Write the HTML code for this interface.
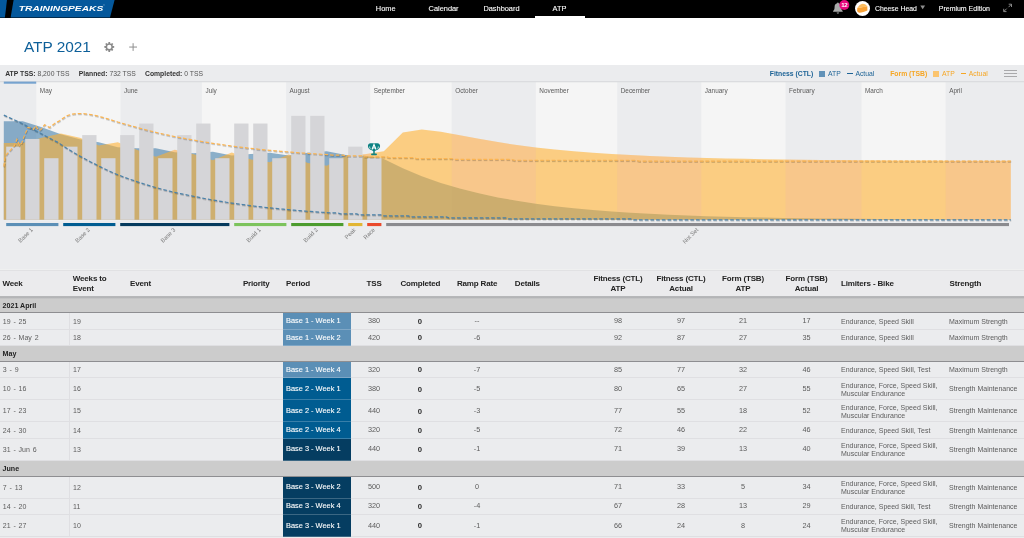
<!DOCTYPE html><html><head><meta charset="utf-8"><title>ATP 2021</title><style>
*{box-sizing:border-box}
html,body{margin:0;padding:0}
body{width:1024px;height:538px;overflow:hidden;background:#fff}
#app{position:relative;width:1024px;height:538px;overflow:hidden;background:#fff;font-family:"Liberation Sans",sans-serif;color:#222;will-change:transform}
.abs{position:absolute;white-space:nowrap}
#hdr{position:absolute;left:0;top:0;width:1024px;height:17.6px;background:#000}
.nav{position:absolute;top:4.2px;font-size:7.4px;line-height:9px;color:#fff;white-space:nowrap;-webkit-text-stroke:0.1px #fff}
#title{position:absolute;left:23.9px;top:38.2px;font-size:15.4px;line-height:17px;color:#0d5f99;white-space:nowrap}
#gray{position:absolute;left:0;top:65.4px;width:1024px;height:473px;background:#ebecee}
.sum{position:absolute;top:69.6px;font-size:6.8px;line-height:8px;color:#555;white-space:nowrap}
.sum b{color:#333}
.lg{position:absolute;top:69.7px;font-size:6.8px;line-height:8px;white-space:nowrap}
#tbl{position:absolute;left:0;top:270.4px;width:1024px}
.th{position:absolute;font-weight:bold;font-size:8px;letter-spacing:-0.16px;line-height:9.4px;color:#222;white-space:nowrap}
.row{position:absolute;left:0;width:1024px;border-bottom:1px solid #dfdfe2;font-size:7px;color:#5c5c5c}
.grp{position:absolute;left:0;width:1024px;background:#cccccc;border-bottom:1.4px solid #8e8e91;font-size:7.1px;font-weight:bold;color:#222}
.grp span{position:absolute;left:2.6px;top:4px;line-height:8px}
.c{position:absolute;white-space:nowrap;line-height:8px;top:50%;margin-top:-3.5px}
.cc{position:absolute;white-space:nowrap;line-height:8px;top:50%;margin-top:-3.8px;transform:translateX(-50%);font-size:7.3px}
.wk{word-spacing:0.9px}
.l2{position:absolute;white-space:nowrap;line-height:7.7px;top:50%;margin-top:-7.1px}
.per{position:absolute;left:283px;width:68.1px;top:0;bottom:-1px;color:#fff;border-bottom:1px solid rgba(255,255,255,0.22);font-size:7.4px;-webkit-text-stroke:0.1px #fff}
.per span{position:absolute;left:3px;top:50%;margin-top:-3.9px;line-height:8px;white-space:nowrap}
.vs{position:absolute;left:69.1px;top:0;bottom:0;width:1.1px;background:#dfdfe2}
</style></head><body><div id="app">
<div id="hdr">
<svg class="abs" style="left:0;top:0" width="120" height="18" viewBox="0 0 120 18">
<path d="M0 0H7L4.900 17.600H0Z" fill="#04589c"/>
<path d="M13.600 0H114.600L110 17.600H10.600Z" fill="#04589c"/>
<text x="18.800" y="10.700" font-size="8.050" font-weight="bold" font-style="italic" fill="#fff" textLength="84.400" lengthAdjust="spacingAndGlyphs">TRAININGPEAKS</text>
<text x="103.300" y="6.300" font-size="2.200" fill="#fff">&#174;</text>
</svg>
<div class="nav" style="left:375.8px">Home</div>
<div class="nav" style="left:428.6px">Calendar</div>
<div class="nav" style="left:483.4px">Dashboard</div>
<div class="nav" style="left:552.5px">ATP</div>
<div class="abs" style="left:534.6px;top:15.9px;width:50.4px;height:1.8px;background:#fff"></div>
<svg class="abs" style="left:830px;top:0" width="40" height="18" viewBox="830 0 40 18">
<path d="M837.900 2.400c0.500 0 0.800 0.300 0.800 0.800c1.600 0.400 2.500 1.800 2.500 3.500c0 2.300 0.400 3.400 1.500 4.400v0.700h-9.600v-0.700c1.100-1 1.500-2.100 1.500-4.400c0-1.700 0.900-3.100 2.500-3.500c0-0.500 0.300-0.800 0.800-0.800z" fill="#a9abab"/>
<path d="M836.700 12.500h2.400c0 0.700-0.500 1.200-1.200 1.200s-1.200-0.500-1.200-1.200z" fill="#a9abab"/>
<circle cx="844.300" cy="5" r="5" fill="#e6097e"/>
<text x="844.300" y="7.150" font-size="6.100" font-weight="bold" fill="#fff" text-anchor="middle" letter-spacing="-0.250">12</text>
<circle cx="862.500" cy="8.500" r="7.500" fill="#fff"/>
<path d="M857.300 7.900L867.300 6.300L867.400 10.500C865 11.600 861.800 12.500 859.100 12.700C858.100 12.300 857.400 11.700 857.100 11Z" fill="#f9a236"/>
<path d="M857.300 8.100C858.300 6 860.300 4.100 862.700 3.700C864.700 3.900 866.500 4.900 867.400 6.500Z" fill="#fbbd60"/>
</svg>
<div class="nav" style="left:875px;color:#fff;font-size:6.85px">Cheese Head</div>
<svg class="abs" style="left:920px;top:5px" width="6" height="5" viewBox="0 0 6 5"><path d="M0.300 0.600h4.800l-2.400 3.600z" fill="#8f8f8f"/></svg>
<div class="nav" style="left:938.8px;color:#fff;font-size:6.98px">Premium Edition</div>
<svg class="abs" style="left:1002px;top:2px" width="12" height="12" viewBox="0 0 12 12" fill="none" stroke="#a0a0a0" stroke-width="0.850">
<path d="M6.500 5.200L9.100 2.600M6.700 2.200H9.500V5"/><path d="M4.700 6.600L2.100 9.200M1.700 6.800V9.600H4.500"/></svg>
</div>
<div id="title">ATP 2021</div>
<svg class="abs" style="left:100px;top:38px" width="44" height="18" viewBox="100 38 44 18"><path d="M108.34 43.38L108.41 42.03L110.11 42.03L110.18 43.38L111.15 43.78L112.15 42.88L113.34 44.07L112.44 45.07L112.84 46.04L114.19 46.11L114.19 47.81L112.84 47.88L112.44 48.85L113.34 49.85L112.15 51.04L111.15 50.14L110.18 50.54L110.11 51.89L108.41 51.89L108.34 50.54L107.37 50.14L106.37 51.04L105.18 49.85L106.08 48.85L105.68 47.88L104.33 47.81L104.33 46.11L105.68 46.04L106.08 45.07L105.18 44.07L106.37 42.88L107.37 43.78ZM107.11 46.96A2.15 2.15 0 1 0 111.41 46.96A2.15 2.15 0 1 0 107.11 46.96Z" fill="#8a8a8a" fill-rule="evenodd"/><circle cx="109.26" cy="46.96" r="0" fill="none"/><path d="M129.200 47.050H137M133.100 43.200V50.900" stroke="#8f8f8f" stroke-width="1" fill="none"/></svg>
<div id="gray"></div>
<div class="sum" style="left:5.2px"><b>ATP TSS:</b> 8,200 TSS</div>
<div class="sum" style="left:78.8px"><b>Planned:</b> 732 TSS</div>
<div class="sum" style="left:145px"><b>Completed:</b> 0 TSS</div>
<div class="lg" style="left:769.8px;color:#1d6396;font-weight:bold">Fitness (CTL)</div>
<div class="abs" style="left:819.3px;top:70.500px;width:6.200px;height:6.200px;background:#6192b8"></div>
<div class="lg" style="left:828px;color:#1d6396">ATP</div>
<div class="abs" style="left:847px;top:73.300px;width:5.800px;height:0.900px;background:#1d6396"></div>
<div class="lg" style="left:855.400px;color:#1d6396">Actual</div>
<div class="lg" style="left:890.200px;color:#f6a623;font-weight:bold">Form (TSB)</div>
<div class="abs" style="left:933px;top:70.500px;width:6.200px;height:6.200px;background:#fbc46e"></div>
<div class="lg" style="left:942px;color:#f6a623">ATP</div>
<div class="abs" style="left:960.600px;top:73.300px;width:5.800px;height:0.900px;background:#f6a623"></div>
<div class="lg" style="left:968.800px;color:#f6a623">Actual</div>
<div class="abs" style="left:1004.400px;top:70.3px;width:12.900px;height:0.900px;background:#a9a9ab"></div>
<div class="abs" style="left:1004.400px;top:73.1px;width:12.900px;height:0.900px;background:#a9a9ab"></div>
<div class="abs" style="left:1004.400px;top:75.9px;width:12.900px;height:0.900px;background:#a9a9ab"></div>
<svg id="chart" width="1024" height="190" viewBox="0 80 1024 190" style="position:absolute;left:0;top:80px">
<rect x="36.37" y="82" width="84.14" height="138.3" fill="#f5f5f5"/>
<rect x="201.94" y="82" width="84.14" height="138.3" fill="#f5f5f5"/>
<rect x="370.23" y="82" width="81.43" height="138.3" fill="#f5f5f5"/>
<rect x="535.8" y="82" width="81.43" height="138.3" fill="#f5f5f5"/>
<rect x="701.37" y="82" width="84.14" height="138.3" fill="#f5f5f5"/>
<rect x="861.51" y="82" width="84.14" height="138.3" fill="#f5f5f5"/>
<rect x="0" y="81" width="1024" height="1.300" fill="#dbdcdf"/>
<rect x="3.8" y="81.6" width="32.4" height="2.1" fill="#76a3cf"/>
<text x="39.87" y="92.9" font-size="6.4" fill="#5a5a5a">May</text>
<text x="124.01" y="92.9" font-size="6.4" fill="#5a5a5a">June</text>
<text x="205.44" y="92.9" font-size="6.4" fill="#5a5a5a">July</text>
<text x="289.59" y="92.9" font-size="6.4" fill="#5a5a5a">August</text>
<text x="373.73" y="92.9" font-size="6.4" fill="#5a5a5a">September</text>
<text x="455.16" y="92.9" font-size="6.4" fill="#5a5a5a">October</text>
<text x="539.3" y="92.9" font-size="6.4" fill="#5a5a5a">November</text>
<text x="620.73" y="92.9" font-size="6.4" fill="#5a5a5a">December</text>
<text x="704.87" y="92.9" font-size="6.4" fill="#5a5a5a">January</text>
<text x="789.01" y="92.9" font-size="6.4" fill="#5a5a5a">February</text>
<text x="865.01" y="92.9" font-size="6.4" fill="#5a5a5a">March</text>
<text x="949.16" y="92.9" font-size="6.4" fill="#5a5a5a">April</text>
<path d="M3.8 219.8L3.8 121.21L22.8 121.21L41.8 127.24L60.8 134.27L79.8 139.3L98.8 142.31L117.8 147.34L136.8 148.34L155.8 148.34L174.8 152.37L193.8 153.37L212.8 151.76L231.8 155.38L250.8 153.97L269.8 152.87L288.8 155.38L307.8 152.87L326.8 151.26L345.8 155.08L364.8 155.78L383.8 158.9L402.8 168.26L421.8 176.18L440.8 182.88L459.8 188.55L478.8 193.35L497.8 197.41L516.8 200.84L535.8 203.75L554.8 206.2L573.8 208.28L592.8 210.04L611.8 211.53L630.8 212.79L649.8 213.85L668.8 214.75L687.8 215.51L706.8 216.16L725.8 216.7L744.8 217.17L763.8 217.56L782.8 217.89L801.8 218.17L820.8 218.4L839.8 218.6L858.8 218.77L877.8 218.91L896.8 219.03L915.8 219.14L934.8 219.22L953.8 219.3L972.8 219.36L991.8 219.41L1010.8 219.46L1010.8 219.8Z" fill="#0a5a94" fill-opacity="0.45"/>
<path d="M3.8 219.8L3.8 143L22.8 143L41.8 137.86L60.8 133.58L79.8 137.86L98.8 145.57L117.8 142.15L136.8 149.86L155.8 156.72L174.8 149.86L193.8 154.14L212.8 160.23L231.8 152.43L250.8 159.5L269.8 162.37L288.8 154.57L307.8 162.97L326.8 165.71L345.8 155.69L364.8 154.14L383.8 151.23L402.8 132.62L421.8 129.59L440.8 131.7L459.8 135.21L478.8 138.81L497.8 142.1L516.8 144.96L535.8 147.41L554.8 149.5L573.8 151.26L592.8 152.76L611.8 154.03L630.8 155.1L649.8 156.01L668.8 156.78L687.8 157.43L706.8 157.98L725.8 158.44L744.8 158.84L763.8 159.17L782.8 159.45L801.8 159.69L820.8 159.89L839.8 160.06L858.8 160.21L877.8 160.33L896.8 160.43L915.8 160.52L934.8 160.59L953.8 160.66L972.8 160.71L991.8 160.75L1010.8 160.79L1010.8 219.8Z" fill="#ffb02f" fill-opacity="0.58"/>
<defs><mask id="om" maskUnits="userSpaceOnUse" x="0" y="80" width="1024" height="150"><path d="M3.8 219.8L3.8 143L22.8 143L41.8 137.86L60.8 133.58L79.8 137.86L98.8 145.57L117.8 142.15L136.8 149.86L155.8 156.72L174.8 149.86L193.8 154.14L212.8 160.23L231.8 152.43L250.8 159.5L269.8 162.37L288.8 154.57L307.8 162.97L326.8 165.71L345.8 155.69L364.8 154.14L383.8 151.23L402.8 132.62L421.8 129.59L440.8 131.7L459.8 135.21L478.8 138.81L497.8 142.1L516.8 144.96L535.8 147.41L554.8 149.5L573.8 151.26L592.8 152.76L611.8 154.03L630.8 155.1L649.8 156.01L668.8 156.78L687.8 157.43L706.8 157.98L725.8 158.44L744.8 158.84L763.8 159.17L782.8 159.45L801.8 159.69L820.8 159.89L839.8 160.06L858.8 160.21L877.8 160.33L896.8 160.43L915.8 160.52L934.8 160.59L953.8 160.66L972.8 160.71L991.8 160.75L1010.8 160.79L1010.8 219.8Z" fill="#fff"/><path d="M3.8 219.8L3.8 121.21L22.8 121.21L41.8 127.24L60.8 134.27L79.8 139.3L98.8 142.31L117.8 147.34L136.8 148.34L155.8 148.34L174.8 152.37L193.8 153.37L212.8 151.76L231.8 155.38L250.8 153.97L269.8 152.87L288.8 155.38L307.8 152.87L326.8 151.26L345.8 155.08L364.8 155.78L383.8 158.9L402.8 168.26L421.8 176.18L440.8 182.88L459.8 188.55L478.8 193.35L497.8 197.41L516.8 200.84L535.8 203.75L554.8 206.2L573.8 208.28L592.8 210.04L611.8 211.53L630.8 212.79L649.8 213.85L668.8 214.75L687.8 215.51L706.8 216.16L725.8 216.7L744.8 217.17L763.8 217.56L782.8 217.89L801.8 218.17L820.8 218.4L839.8 218.6L858.8 218.77L877.8 218.91L896.8 219.03L915.8 219.14L934.8 219.22L953.8 219.3L972.8 219.36L991.8 219.41L1010.8 219.46L1010.8 219.8Z" fill="#000"/></mask></defs>
<g mask="url(#om)" fill="#ffbae3" fill-opacity="0.12">
<rect x="0" y="82" width="36.37" height="138.3"/>
<rect x="120.51" y="82" width="81.43" height="138.3"/>
<rect x="286.09" y="82" width="84.14" height="138.3"/>
<rect x="451.66" y="82" width="84.14" height="138.3"/>
<rect x="617.23" y="82" width="84.14" height="138.3"/>
<rect x="785.51" y="82" width="76" height="138.3"/>
<rect x="945.66" y="82" width="78.34" height="138.3"/>
</g>
<rect x="6.2" y="146.65" width="14.3" height="73.15" fill="#d5d5d8"/>
<rect x="25.2" y="138.95" width="14.3" height="80.85" fill="#d5d5d8"/>
<rect x="44.2" y="158.2" width="14.3" height="61.6" fill="#d5d5d8"/>
<rect x="63.2" y="146.65" width="14.3" height="73.15" fill="#d5d5d8"/>
<rect x="82.2" y="135.1" width="14.3" height="84.7" fill="#d5d5d8"/>
<rect x="101.2" y="158.2" width="14.3" height="61.6" fill="#d5d5d8"/>
<rect x="120.2" y="135.1" width="14.3" height="84.7" fill="#d5d5d8"/>
<rect x="139.2" y="123.55" width="14.3" height="96.25" fill="#d5d5d8"/>
<rect x="158.2" y="158.2" width="14.3" height="61.6" fill="#d5d5d8"/>
<rect x="177.2" y="135.1" width="14.3" height="84.7" fill="#d5d5d8"/>
<rect x="196.2" y="123.55" width="14.3" height="96.25" fill="#d5d5d8"/>
<rect x="215.2" y="158.2" width="14.3" height="61.6" fill="#d5d5d8"/>
<rect x="234.2" y="123.55" width="14.3" height="96.25" fill="#d5d5d8"/>
<rect x="253.2" y="123.55" width="14.3" height="96.25" fill="#d5d5d8"/>
<rect x="272.2" y="158.2" width="14.3" height="61.6" fill="#d5d5d8"/>
<rect x="291.2" y="115.85" width="14.3" height="103.95" fill="#d5d5d8"/>
<rect x="310.2" y="115.85" width="14.3" height="103.95" fill="#d5d5d8"/>
<rect x="329.2" y="158.2" width="14.3" height="61.6" fill="#d5d5d8"/>
<rect x="348.2" y="146.65" width="14.3" height="73.15" fill="#d5d5d8"/>
<rect x="367.2" y="158.2" width="14.3" height="61.6" fill="#d5d5d8"/>
<defs><path id="lc" d="M3.8 115.14L6.51 116.39L9.23 117.62L11.94 118.84L14.66 120.05L17.37 121.24L20.09 122.42L22.8 123.92L25.51 125.4L28.23 126.86L30.94 128.29L33.66 129.7L36.37 131.1L39.09 132.46L41.8 133.98L44.51 135.46L47.23 136.92L49.94 138.36L52.66 139.77L55.37 141.15L58.09 142.51L60.8 144.37L63.51 146.17L66.23 147.93L68.94 149.66L71.66 151.34L74.37 152.97L77.09 154.57L79.8 156.12L82.51 157.62L85.23 159.09L87.94 160.52L90.66 161.92L93.37 163.29L96.09 164.62L98.8 166.02L101.51 167.38L104.23 168.7L106.94 169.99L109.66 171.25L112.37 172.47L115.09 173.67L117.8 174.75L120.51 175.8L123.23 176.83L125.94 177.83L128.66 178.81L131.37 179.77L134.09 180.7L136.8 181.63L139.51 182.53L142.23 183.41L144.94 184.27L147.66 185.11L150.37 185.93L153.09 186.73L155.8 187.5L158.51 188.26L161.23 188.99L163.94 189.71L166.66 190.41L169.37 191.09L172.09 191.76L174.8 192.37L177.51 192.97L180.23 193.56L182.94 194.13L185.66 194.69L188.37 195.24L191.09 195.78L193.8 196.35L196.51 196.91L199.23 197.45L201.94 197.98L204.66 198.5L207.37 199L210.09 199.49L212.8 199.98L215.51 200.45L218.23 200.91L220.94 201.35L223.66 201.79L226.37 202.22L229.09 202.64L231.8 203.04L234.51 203.44L237.23 203.83L239.94 204.21L242.66 204.58L245.37 204.94L248.09 205.3L250.8 205.64L253.51 205.98L256.23 206.31L258.94 206.63L261.66 206.94L264.37 207.25L267.09 207.54L269.8 207.84L272.51 208.12L275.23 208.4L277.94 208.67L280.66 208.94L283.37 209.19L286.09 209.45L288.8 209.69L291.51 209.93L294.23 210.17L296.94 210.4L299.66 210.62L302.37 210.84L305.09 211.06L307.8 211.27L310.51 211.47L313.23 211.67L315.94 211.86L318.66 212.05L321.37 212.24L324.09 212.42L326.8 212.6L329.51 212.77L332.23 212.86L334.94 212.86L337.66 212.86L340.37 213.87L343.09 213.87L345.8 213.87L348.51 213.87L351.23 213.87L353.94 213.87L356.66 213.87L359.37 214.87L362.09 214.87L364.8 214.87L367.51 214.87L370.23 214.87L372.94 214.87L375.66 214.87L378.37 214.87L381.09 214.87L383.8 215.88L386.51 215.88L389.23 215.88L391.94 215.88L394.66 215.88L397.37 215.88L400.09 215.88L402.8 215.88L405.51 215.88L408.23 215.88L410.94 216.88L413.66 216.88L416.37 216.88L419.09 216.88L421.8 216.88L424.51 216.88L427.23 216.88L429.94 216.88L432.66 216.88L435.37 216.88L438.09 216.88L440.8 216.88L443.51 216.88L446.23 216.88L448.94 217.89L451.66 217.89L454.37 217.89L457.09 217.89L459.8 217.89L462.51 217.89L465.23 217.89L467.94 217.89L470.66 217.89L473.37 217.89L476.09 217.89L478.8 217.89L481.51 217.89L484.23 217.89L486.94 217.89L489.66 217.89L492.37 217.89L495.09 217.89L497.8 217.89L500.51 217.89L503.23 217.89L505.94 217.89L508.66 218.89L511.37 218.89L514.09 218.89L516.8 218.89L519.51 218.89L522.23 218.89L524.94 218.89L527.66 218.89L530.37 218.89L533.09 218.89L535.8 218.89L538.51 218.89L541.23 218.89L543.94 218.89L546.66 218.89L549.37 218.89L552.09 218.89L554.8 218.89L557.51 218.89L560.23 218.89L562.94 218.89L565.66 218.89L568.37 218.89L571.09 218.89L573.8 218.89L576.51 218.89L579.23 218.89L581.94 218.89L584.66 218.89L587.37 218.89L590.09 218.89L592.8 218.89L595.51 218.89L598.23 218.89L600.94 218.89L603.66 218.89L606.37 218.89L609.09 218.89L611.8 218.89L614.51 218.89L617.23 218.89L619.94 218.89L622.66 218.89L625.37 218.89L628.09 218.89L630.8 218.89L633.51 219.9L636.23 219.9L638.94 219.9L641.66 219.9L644.37 219.9L647.09 219.9L649.8 219.9L652.51 219.9L655.23 219.9L657.94 219.9L660.66 219.9L663.37 219.9L666.09 219.9L668.8 219.9L671.51 219.9L674.23 219.9L676.94 219.9L679.66 219.9L682.37 219.9L685.09 219.9L687.8 219.9L690.51 219.9L693.23 219.9L695.94 219.9L698.66 219.9L701.37 219.9L704.09 219.9L706.8 219.9L709.51 219.9L712.23 219.9L714.94 219.9L717.66 219.9L720.37 219.9L723.09 219.9L725.8 219.9L728.51 219.9L731.23 219.9L733.94 219.9L736.66 219.9L739.37 219.9L742.09 219.9L744.8 219.9L747.51 219.9L750.23 219.9L752.94 219.9L755.66 219.9L758.37 219.9L761.09 219.9L763.8 219.9L766.51 219.9L769.23 219.9L771.94 219.9L774.66 219.9L777.37 219.9L780.09 219.9L782.8 219.9L785.51 219.9L788.23 219.9L790.94 219.9L793.66 219.9L796.37 219.9L799.09 219.9L801.8 219.9L804.51 219.9L807.23 219.9L809.94 219.9L812.66 219.9L815.37 219.9L818.09 219.9L820.8 219.9L823.51 219.9L826.23 219.9L828.94 219.9L831.66 219.9L834.37 219.9L837.09 219.9L839.8 219.9L842.51 219.9L845.23 219.9L847.94 219.9L850.66 219.9L853.37 219.9L856.09 219.9L858.8 219.9L861.51 219.9L864.23 219.9L866.94 219.9L869.66 219.9L872.37 219.9L875.09 219.9L877.8 219.9L880.51 219.9L883.23 219.9L885.94 219.9L888.66 219.9L891.37 219.9L894.09 219.9L896.8 219.9L899.51 219.9L902.23 219.9L904.94 219.9L907.66 219.9L910.37 219.9L913.09 219.9L915.8 219.9L918.51 219.9L921.23 219.9L923.94 219.9L926.66 219.9L929.37 219.9L932.09 219.9L934.8 219.9L937.51 219.9L940.23 219.9L942.94 219.9L945.66 219.9L948.37 219.9L951.09 219.9L953.8 219.9L956.51 219.9L959.23 219.9L961.94 219.9L964.66 219.9L967.37 219.9L970.09 219.9L972.8 219.9L975.51 219.9L978.23 219.9L980.94 219.9L983.66 219.9L986.37 219.9L989.09 219.9L991.8 219.9L994.51 219.9L997.23 219.9L999.94 219.9L1002.66 219.9L1005.37 219.9L1008.09 219.9L1010.8 219.9" fill="none" stroke-dasharray="3.6 2.1"/></defs>
<use href="#lc" transform="translate(0.45 0.85)" stroke="#000" stroke-opacity="0.10" stroke-width="2.2"/>
<use href="#lc" transform="translate(0.45 0.85)" stroke="#000" stroke-opacity="0.12" stroke-width="1.2"/>
<use href="#lc" stroke="#4a82aa" stroke-width="1.2"/>
<defs><path id="lt" d="M3.9 166.6L5 157.7L6.7 154.3L11.2 149.3L14.5 145.4L16.95 139.3L19.5 145.4L21.7 143.2L24.5 135.4L27.9 127.5L30.7 128.1L33.5 129.2L35.7 125.6L38.5 130.3L40.7 129.8L44.6 124.8L49.6 127.5L55 123.3L60 120.5L66.23 116.04L68.94 115.01L71.66 114.28L74.37 113.82L77.09 113.57L79.8 113.52L82.51 113.6L85.23 113.82L87.94 114.16L90.66 114.59L93.37 115.1L96.09 115.68L98.8 116.31L101.51 117.07L104.23 117.85L106.94 118.66L109.66 119.48L112.37 120.32L115.09 121.16L117.8 122.01L120.51 122.78L123.23 123.55L125.94 124.32L128.66 125.09L131.37 125.85L134.09 126.6L136.8 127.35L139.51 128.09L142.23 128.82L144.94 129.55L147.66 130.26L150.37 130.96L153.09 131.64L155.8 132.31L158.51 132.96L161.23 133.6L163.94 134.22L166.66 134.83L169.37 135.43L172.09 136.02L174.8 136.59L177.51 137.12L180.23 137.63L182.94 138.14L185.66 138.64L188.37 139.12L191.09 139.6L193.8 140.06L196.51 140.56L199.23 141.04L201.94 141.51L204.66 141.97L207.37 142.42L210.09 142.86L212.8 143.29L215.51 143.71L218.23 144.12L220.94 144.52L223.66 144.91L226.37 145.29L229.09 145.67L231.8 146.03L234.51 146.38L237.23 146.73L239.94 147.07L242.66 147.4L245.37 147.72L248.09 148.04L250.8 148.35L253.51 148.65L256.23 148.94L258.94 149.23L261.66 149.51L264.37 149.78L267.09 150.05L269.8 150.31L272.51 150.57L275.23 150.81L277.94 151.06L280.66 151.29L283.37 151.53L286.09 151.75L288.8 151.97L291.51 152.19L294.23 152.4L296.94 152.6L299.66 152.8L302.37 153L305.09 153.19L307.8 153.38L310.51 153.56L313.23 153.74L315.94 153.91L318.66 154.08L321.37 154.25L324.09 154.41L326.8 154.57L329.51 154.72L332.23 155.1L334.94 155.1L337.66 155.1L340.37 155.1L343.09 155.1L345.8 155.96L348.51 155.96L351.23 155.96L353.94 155.96L356.66 155.96L359.37 155.96L362.09 155.96L364.8 156.81L367.51 156.81L370.23 156.81L372.94 156.81L375.66 156.81L378.37 156.81L381.09 156.81L383.8 156.81L386.51 156.81L389.23 157.67L391.94 157.67L394.66 157.67L397.37 157.67L400.09 157.67L402.8 157.67L405.51 157.67L408.23 157.67L410.94 157.67L413.66 157.67L416.37 158.53L419.09 158.53L421.8 158.53L424.51 158.53L427.23 158.53L429.94 158.53L432.66 158.53L435.37 158.53L438.09 158.53L440.8 158.53L443.51 158.53L446.23 158.53L448.94 158.53L451.66 158.53L454.37 159.39L457.09 159.39L459.8 159.39L462.51 159.39L465.23 159.39L467.94 159.39L470.66 159.39L473.37 159.39L476.09 159.39L478.8 159.39L481.51 159.39L484.23 159.39L486.94 159.39L489.66 159.39L492.37 159.39L495.09 159.39L497.8 159.39L500.51 159.39L503.23 159.39L505.94 159.39L508.66 159.39L511.37 159.39L514.09 160.24L516.8 160.24L519.51 160.24L522.23 160.24L524.94 160.24L527.66 160.24L530.37 160.24L533.09 160.24L535.8 160.24L538.51 160.24L541.23 160.24L543.94 160.24L546.66 160.24L549.37 160.24L552.09 160.24L554.8 160.24L557.51 160.24L560.23 160.24L562.94 160.24L565.66 160.24L568.37 160.24L571.09 160.24L573.8 160.24L576.51 160.24L579.23 160.24L581.94 160.24L584.66 160.24L587.37 160.24L590.09 160.24L592.8 160.24L595.51 160.24L598.23 160.24L600.94 160.24L603.66 160.24L606.37 160.24L609.09 160.24L611.8 160.24L614.51 160.24L617.23 160.24L619.94 160.24L622.66 160.24L625.37 160.24L628.09 160.24L630.8 160.24L633.51 160.24L636.23 160.24L638.94 161.1L641.66 161.1L644.37 161.1L647.09 161.1L649.8 161.1L652.51 161.1L655.23 161.1L657.94 161.1L660.66 161.1L663.37 161.1L666.09 161.1L668.8 161.1L671.51 161.1L674.23 161.1L676.94 161.1L679.66 161.1L682.37 161.1L685.09 161.1L687.8 161.1L690.51 161.1L693.23 161.1L695.94 161.1L698.66 161.1L701.37 161.1L704.09 161.1L706.8 161.1L709.51 161.1L712.23 161.1L714.94 161.1L717.66 161.1L720.37 161.1L723.09 161.1L725.8 161.1L728.51 161.1L731.23 161.1L733.94 161.1L736.66 161.1L739.37 161.1L742.09 161.1L744.8 161.1L747.51 161.1L750.23 161.1L752.94 161.1L755.66 161.1L758.37 161.1L761.09 161.1L763.8 161.1L766.51 161.1L769.23 161.1L771.94 161.1L774.66 161.1L777.37 161.1L780.09 161.1L782.8 161.1L785.51 161.1L788.23 161.1L790.94 161.1L793.66 161.1L796.37 161.1L799.09 161.1L801.8 161.1L804.51 161.1L807.23 161.1L809.94 161.1L812.66 161.1L815.37 161.1L818.09 161.1L820.8 161.1L823.51 161.1L826.23 161.1L828.94 161.1L831.66 161.1L834.37 161.1L837.09 161.1L839.8 161.1L842.51 161.1L845.23 161.1L847.94 161.1L850.66 161.1L853.37 161.1L856.09 161.1L858.8 161.1L861.51 161.1L864.23 161.1L866.94 161.1L869.66 161.1L872.37 161.1L875.09 161.1L877.8 161.1L880.51 161.1L883.23 161.1L885.94 161.1L888.66 161.1L891.37 161.1L894.09 161.1L896.8 161.1L899.51 161.1L902.23 161.1L904.94 161.1L907.66 161.1L910.37 161.1L913.09 161.1L915.8 161.1L918.51 161.1L921.23 161.1L923.94 161.1L926.66 161.1L929.37 161.1L932.09 161.1L934.8 161.1L937.51 161.1L940.23 161.1L942.94 161.1L945.66 161.1L948.37 161.1L951.09 161.1L953.8 161.1L956.51 161.1L959.23 161.1L961.94 161.1L964.66 161.1L967.37 161.1L970.09 161.1L972.8 161.1L975.51 161.1L978.23 161.1L980.94 161.1L983.66 161.1L986.37 161.1L989.09 161.1L991.8 161.1L994.51 161.1L997.23 161.1L999.94 161.1L1002.66 161.1L1005.37 161.1L1008.09 161.1L1010.8 161.1" fill="none" stroke-dasharray="3.6 2.1"/></defs>
<use href="#lt" transform="translate(0.45 0.85)" stroke="#000" stroke-opacity="0.10" stroke-width="2.2"/>
<use href="#lt" transform="translate(0.45 0.85)" stroke="#000" stroke-opacity="0.12" stroke-width="1.2"/>
<use href="#lt" stroke="#fcb552" stroke-width="1.2"/>
<rect x="6.2" y="223" width="52.2" height="3.1" fill="#5b8fb6"/>
<text transform="translate(33.3 230.2) rotate(-45)" text-anchor="end" font-size="5.8" fill="#7c7c7c">Base 1</text>
<rect x="63.2" y="223" width="52.2" height="3.1" fill="#005c91"/>
<text transform="translate(90.3 230.2) rotate(-45)" text-anchor="end" font-size="5.8" fill="#7c7c7c">Base 2</text>
<rect x="120.2" y="223" width="109.2" height="3.1" fill="#053a5d"/>
<text transform="translate(175.8 230.2) rotate(-45)" text-anchor="end" font-size="5.8" fill="#7c7c7c">Base 3</text>
<rect x="234.2" y="223" width="52.2" height="3.1" fill="#7cc35c"/>
<text transform="translate(261.3 230.2) rotate(-45)" text-anchor="end" font-size="5.8" fill="#7c7c7c">Build 1</text>
<rect x="291.2" y="223" width="52.2" height="3.1" fill="#4c9c2e"/>
<text transform="translate(318.3 230.2) rotate(-45)" text-anchor="end" font-size="5.8" fill="#7c7c7c">Build 2</text>
<rect x="348.2" y="223" width="14.2" height="3.1" fill="#e2b634"/>
<text transform="translate(356.3 230.2) rotate(-45)" text-anchor="end" font-size="5.8" fill="#7c7c7c">Peak</text>
<rect x="367.2" y="223" width="14.2" height="3.1" fill="#ea4a2c"/>
<text transform="translate(375.3 230.2) rotate(-45)" text-anchor="end" font-size="5.8" fill="#7c7c7c">Race</text>
<rect x="386.2" y="223" width="622.8" height="3.1" fill="#8b8b8f"/>
<text transform="translate(698.6 230.2) rotate(-45)" text-anchor="end" font-size="5.8" fill="#7c7c7c">Not Set</text>
<g transform="translate(368 142.900)" fill="#0d8283">
<path d="M2.500 0.250H9.500C10.900 0.250 12.100 1.400 12.100 3.200C12.100 5.400 10.200 6.850 8.300 7.450C7.500 7.750 6.950 8.100 6.750 8.500H5.250C5.050 8.100 4.500 7.750 3.700 7.450C1.800 6.850 -0.100 5.400 -0.100 3.200C-0.100 1.400 1.100 0.250 2.500 0.250Z"/>
<rect x="5.250" y="8.300" width="1.500" height="2.700"/>
<rect x="3.100" y="10.700" width="5.800" height="1.550" rx="0.650"/>
<path d="M1.650 3.600C1.650 4.500 1.850 5.200 2.300 5.800M10.350 3.600C10.350 4.500 10.150 5.200 9.700 5.800" fill="none" stroke="#fff" stroke-width="0.800"/>
<path d="M4 6.600L6 1.700L8 6.600M4.800 5.100H7.200" fill="none" stroke="#fff" stroke-width="1.150"/>
</g>
</svg>
<div id="tbl">
<div class="abs" style="left:0;top:0;width:1024px;height:25.400px;background:#ebebed;border-top:1px solid #e1e1e3;box-shadow:0 -0.8px 0 #f0f0f1"></div>
<div class="abs" style="left:0;top:25.600px;width:1024px;height:2.100px;background:linear-gradient(#ebebed 0,#b6b7b9 0.5px,#b2b3b5 1.3px,#b8b9bb 2.1px);z-index:2"></div>
<div class="abs" style="left:0;top:27.700px;width:1024px;height:1.400px;background:linear-gradient(#babbbd,#cccccc);z-index:2"></div>
<div class="th" style="left:2.5px;top:8.9px">Week</div>
<div class="th" style="left:72.8px;top:4.0px">Weeks to<br>Event</div>
<div class="th" style="left:130px;top:8.9px">Event</div>
<div class="th" style="left:242.9px;top:8.9px">Priority</div>
<div class="th" style="left:286px;top:8.9px">Period</div>
<div class="th" style="left:374.1px;top:8.9px;transform:translateX(-50%);text-align:center">TSS</div>
<div class="th" style="left:420.4px;top:8.9px;transform:translateX(-50%);text-align:center">Completed</div>
<div class="th" style="left:477.1px;top:8.9px;transform:translateX(-50%);text-align:center">Ramp Rate</div>
<div class="th" style="left:514.8px;top:8.9px">Details</div>
<div class="th" style="left:618px;top:4.0px;transform:translateX(-50%);text-align:center">Fitness (CTL)<br>ATP</div>
<div class="th" style="left:681px;top:4.0px;transform:translateX(-50%);text-align:center">Fitness (CTL)<br>Actual</div>
<div class="th" style="left:743px;top:4.0px;transform:translateX(-50%);text-align:center">Form (TSB)<br>ATP</div>
<div class="th" style="left:806.5px;top:4.0px;transform:translateX(-50%);text-align:center">Form (TSB)<br>Actual</div>
<div class="th" style="left:841px;top:8.9px">Limiters - Bike</div>
<div class="th" style="left:949.5px;top:8.9px">Strength</div>
<div class="grp" style="top:27.2px;height:15.8px"><span>2021 April</span></div>
<div class="row" style="top:43.0px;height:16.4px">
<div class="vs"></div>
<div class="c wk" style="left:2.800px">19 - 25</div><div class="c" style="left:73.100px">19</div>
<div class="per" style="background:#5b8fb6"><span>Base 1 - Week 1</span></div>
<div class="cc" style="left:374.100px">380</div>
<div class="cc" style="left:420px;font-weight:bold;color:#2a2a2a;font-size:7.7px;margin-top:-3.4px">0</div>
<div class="cc" style="left:477px">--</div>
<div class="cc" style="left:618px">98</div>
<div class="cc" style="left:681px">97</div>
<div class="cc" style="left:743px">21</div>
<div class="cc" style="left:806.5px">17</div>
<div class="c" style="left:841px">Endurance, Speed Skill</div>
<div class="c" style="left:949px">Maximum Strength</div>
</div>
<div class="row" style="top:59.4px;height:16.4px">
<div class="vs"></div>
<div class="c wk" style="left:2.800px">26 - May 2</div><div class="c" style="left:73.100px">18</div>
<div class="per" style="background:#5b8fb6"><span>Base 1 - Week 2</span></div>
<div class="cc" style="left:374.100px">420</div>
<div class="cc" style="left:420px;font-weight:bold;color:#2a2a2a;font-size:7.7px;margin-top:-3.4px">0</div>
<div class="cc" style="left:477px">-6</div>
<div class="cc" style="left:618px">92</div>
<div class="cc" style="left:681px">87</div>
<div class="cc" style="left:743px">27</div>
<div class="cc" style="left:806.5px">35</div>
<div class="c" style="left:841px">Endurance, Speed Skill</div>
<div class="c" style="left:949px">Maximum Strength</div>
</div>
<div class="grp" style="top:75.8px;height:15.8px"><span>May</span></div>
<div class="row" style="top:91.6px;height:16.4px">
<div class="vs"></div>
<div class="c wk" style="left:2.800px">3 - 9</div><div class="c" style="left:73.100px">17</div>
<div class="per" style="background:#5b8fb6"><span>Base 1 - Week 4</span></div>
<div class="cc" style="left:374.100px">320</div>
<div class="cc" style="left:420px;font-weight:bold;color:#2a2a2a;font-size:7.7px;margin-top:-3.4px">0</div>
<div class="cc" style="left:477px">-7</div>
<div class="cc" style="left:618px">85</div>
<div class="cc" style="left:681px">77</div>
<div class="cc" style="left:743px">32</div>
<div class="cc" style="left:806.5px">46</div>
<div class="c" style="left:841px">Endurance, Speed Skill, Test</div>
<div class="c" style="left:949px">Maximum Strength</div>
</div>
<div class="row" style="top:108.0px;height:22px">
<div class="vs"></div>
<div class="c wk" style="left:2.800px">10 - 16</div><div class="c" style="left:73.100px">16</div>
<div class="per" style="background:#005c91"><span>Base 2 - Week 1</span></div>
<div class="cc" style="left:374.100px">380</div>
<div class="cc" style="left:420px;font-weight:bold;color:#2a2a2a;font-size:7.7px;margin-top:-3.4px">0</div>
<div class="cc" style="left:477px">-5</div>
<div class="cc" style="left:618px">80</div>
<div class="cc" style="left:681px">65</div>
<div class="cc" style="left:743px">27</div>
<div class="cc" style="left:806.5px">55</div>
<div class="l2" style="left:841px">Endurance, Force, Speed Skill,<br>Muscular Endurance</div>
<div class="c" style="left:949px">Strength Maintenance</div>
</div>
<div class="row" style="top:130.0px;height:22px">
<div class="vs"></div>
<div class="c wk" style="left:2.800px">17 - 23</div><div class="c" style="left:73.100px">15</div>
<div class="per" style="background:#005c91"><span>Base 2 - Week 2</span></div>
<div class="cc" style="left:374.100px">440</div>
<div class="cc" style="left:420px;font-weight:bold;color:#2a2a2a;font-size:7.7px;margin-top:-3.4px">0</div>
<div class="cc" style="left:477px">-3</div>
<div class="cc" style="left:618px">77</div>
<div class="cc" style="left:681px">55</div>
<div class="cc" style="left:743px">18</div>
<div class="cc" style="left:806.5px">52</div>
<div class="l2" style="left:841px">Endurance, Force, Speed Skill,<br>Muscular Endurance</div>
<div class="c" style="left:949px">Strength Maintenance</div>
</div>
<div class="row" style="top:152.0px;height:16.4px">
<div class="vs"></div>
<div class="c wk" style="left:2.800px">24 - 30</div><div class="c" style="left:73.100px">14</div>
<div class="per" style="background:#005c91"><span>Base 2 - Week 4</span></div>
<div class="cc" style="left:374.100px">320</div>
<div class="cc" style="left:420px;font-weight:bold;color:#2a2a2a;font-size:7.7px;margin-top:-3.4px">0</div>
<div class="cc" style="left:477px">-5</div>
<div class="cc" style="left:618px">72</div>
<div class="cc" style="left:681px">46</div>
<div class="cc" style="left:743px">22</div>
<div class="cc" style="left:806.5px">46</div>
<div class="c" style="left:841px">Endurance, Speed Skill, Test</div>
<div class="c" style="left:949px">Strength Maintenance</div>
</div>
<div class="row" style="top:168.4px;height:22px">
<div class="vs"></div>
<div class="c wk" style="left:2.800px">31 - Jun 6</div><div class="c" style="left:73.100px">13</div>
<div class="per" style="background:#053d61"><span>Base 3 - Week 1</span></div>
<div class="cc" style="left:374.100px">440</div>
<div class="cc" style="left:420px;font-weight:bold;color:#2a2a2a;font-size:7.7px;margin-top:-3.4px">0</div>
<div class="cc" style="left:477px">-1</div>
<div class="cc" style="left:618px">71</div>
<div class="cc" style="left:681px">39</div>
<div class="cc" style="left:743px">13</div>
<div class="cc" style="left:806.5px">40</div>
<div class="l2" style="left:841px">Endurance, Force, Speed Skill,<br>Muscular Endurance</div>
<div class="c" style="left:949px">Strength Maintenance</div>
</div>
<div class="grp" style="top:190.4px;height:15.8px"><span>June</span></div>
<div class="row" style="top:206.2px;height:22px">
<div class="vs"></div>
<div class="c wk" style="left:2.800px">7 - 13</div><div class="c" style="left:73.100px">12</div>
<div class="per" style="background:#053d61"><span>Base 3 - Week 2</span></div>
<div class="cc" style="left:374.100px">500</div>
<div class="cc" style="left:420px;font-weight:bold;color:#2a2a2a;font-size:7.7px;margin-top:-3.4px">0</div>
<div class="cc" style="left:477px">0</div>
<div class="cc" style="left:618px">71</div>
<div class="cc" style="left:681px">33</div>
<div class="cc" style="left:743px">5</div>
<div class="cc" style="left:806.5px">34</div>
<div class="l2" style="left:841px">Endurance, Force, Speed Skill,<br>Muscular Endurance</div>
<div class="c" style="left:949px">Strength Maintenance</div>
</div>
<div class="row" style="top:228.2px;height:16.4px">
<div class="vs"></div>
<div class="c wk" style="left:2.800px">14 - 20</div><div class="c" style="left:73.100px">11</div>
<div class="per" style="background:#053d61"><span>Base 3 - Week 4</span></div>
<div class="cc" style="left:374.100px">320</div>
<div class="cc" style="left:420px;font-weight:bold;color:#2a2a2a;font-size:7.7px;margin-top:-3.4px">0</div>
<div class="cc" style="left:477px">-4</div>
<div class="cc" style="left:618px">67</div>
<div class="cc" style="left:681px">28</div>
<div class="cc" style="left:743px">13</div>
<div class="cc" style="left:806.5px">29</div>
<div class="c" style="left:841px">Endurance, Speed Skill, Test</div>
<div class="c" style="left:949px">Strength Maintenance</div>
</div>
<div class="row" style="top:244.6px;height:22px">
<div class="vs"></div>
<div class="c wk" style="left:2.800px">21 - 27</div><div class="c" style="left:73.100px">10</div>
<div class="per" style="background:#053d61"><span>Base 3 - Week 1</span></div>
<div class="cc" style="left:374.100px">440</div>
<div class="cc" style="left:420px;font-weight:bold;color:#2a2a2a;font-size:7.7px;margin-top:-3.4px">0</div>
<div class="cc" style="left:477px">-1</div>
<div class="cc" style="left:618px">66</div>
<div class="cc" style="left:681px">24</div>
<div class="cc" style="left:743px">8</div>
<div class="cc" style="left:806.5px">24</div>
<div class="l2" style="left:841px">Endurance, Force, Speed Skill,<br>Muscular Endurance</div>
<div class="c" style="left:949px">Strength Maintenance</div>
</div>
</div>
</div></body></html>
